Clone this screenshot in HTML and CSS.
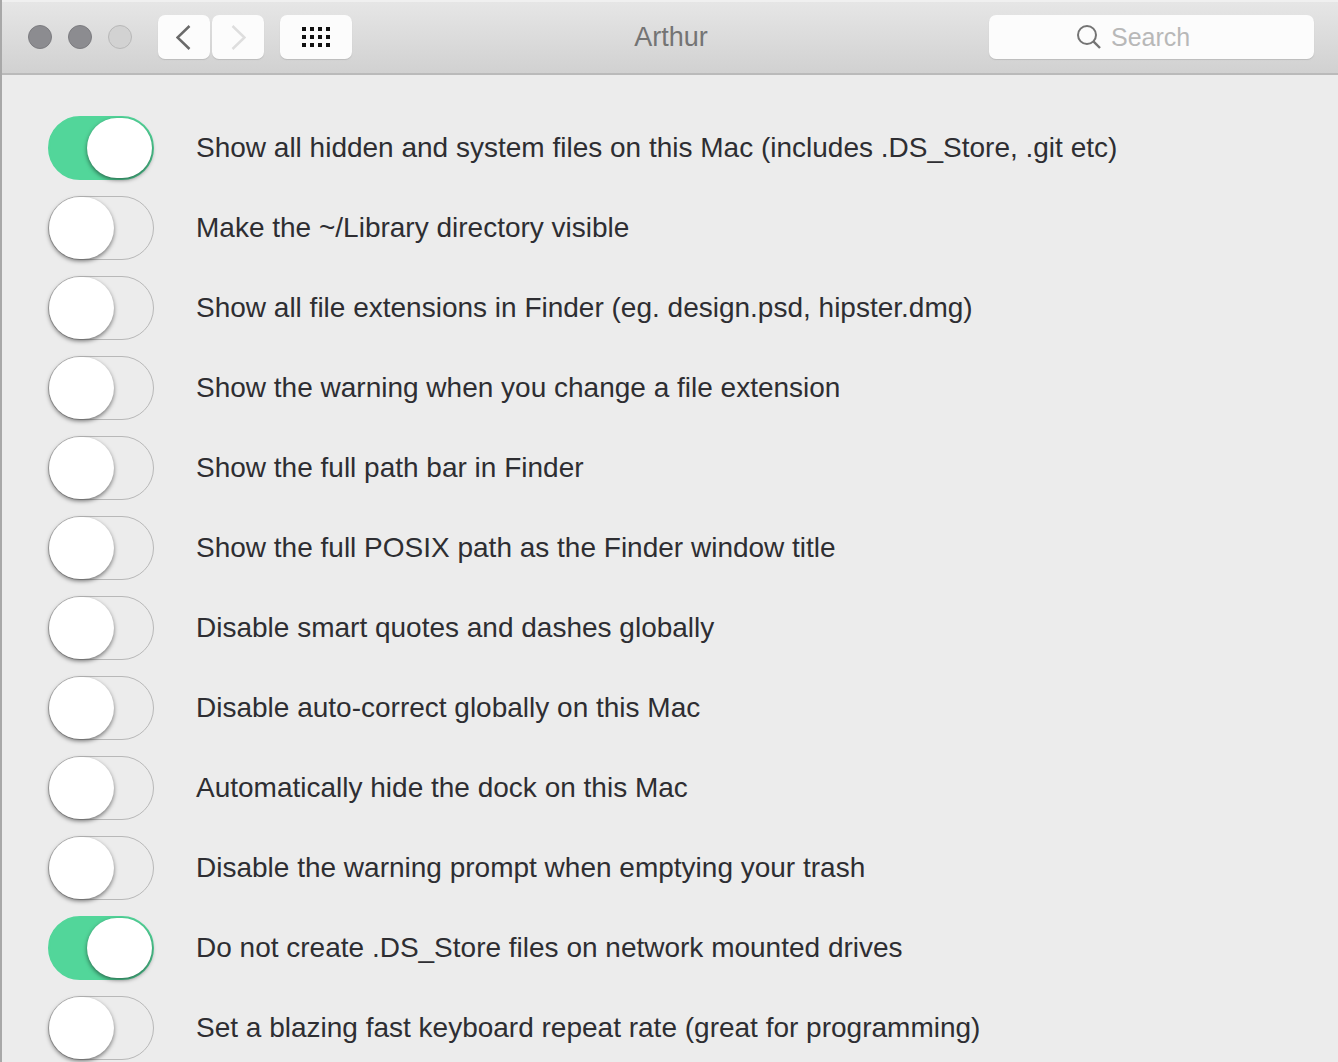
FILE: index.html
```html
<!DOCTYPE html>
<html lang="en">
<head>
<meta charset="utf-8">
<meta name="viewport" content="width=device-width, initial-scale=1">
<title>Arthur</title>
<link rel="stylesheet" href="styles.css">
</head>
<body>
<div class="window">
  <header class="toolbar">
    <div class="toolbar-left">
      <div class="lights">
        <button class="light" type="button" aria-label="Close"></button>
        <button class="light" type="button" aria-label="Minimize"></button>
        <button class="light light-off" type="button" aria-label="Zoom" disabled></button>
      </div>
      <nav class="nav">
        <button class="tool" type="button" aria-label="Back">
          <svg width="16" height="26" viewBox="0 0 16 26"><path d="M13.500 2 1.500 13.500l12 11.500" fill="none" stroke="#6a6a6a" stroke-width="2.5"/></svg>
        </button>
        <button class="tool" type="button" aria-label="Forward" disabled>
          <svg width="16" height="26" viewBox="0 0 16 26"><path d="M2.500 2l12 11.500L2.500 25" fill="none" stroke="#dedede" stroke-width="2.5"/></svg>
        </button>
      </nav>
      <button class="tool tool-wide" type="button" aria-label="Show all">
        <svg width="30" height="22" viewBox="0 0 30 22" fill="#111"><path d="M1 1h4v4H1zM9 1h4v4H9zM17 1h4v4h-4zM25 1h4v4h-4zM1 9h4v4H1zM9 9h4v4H9zM17 9h4v4h-4zM25 9h4v4h-4zM1 17h4v4H1zM9 17h4v4H9zM17 17h4v4h-4zM25 17h4v4h-4z"/></svg>
      </button>
    </div>
    <h1 class="title">Arthur</h1>
    <label class="search">
      <svg width="24" height="24" viewBox="0 0 24 24" fill="none" stroke="#747474" stroke-width="2"><circle cx="10" cy="10" r="9"/><path d="M16.400 16.400 23 23" stroke-width="2.4"/></svg>
      <input class="search-input" type="text" placeholder="Search" aria-label="Search">
    </label>
  </header>
  <main class="settings">
    <label class="row"><input class="switch" type="checkbox" checked><span>Show all hidden and system files on this Mac (includes .DS_Store, .git etc)</span></label>
    <label class="row"><input class="switch" type="checkbox"><span>Make the ~/Library directory visible</span></label>
    <label class="row"><input class="switch" type="checkbox"><span>Show all file extensions in Finder (eg. design.psd, hipster.dmg)</span></label>
    <label class="row"><input class="switch" type="checkbox"><span>Show the warning when you change a file extension</span></label>
    <label class="row"><input class="switch" type="checkbox"><span>Show the full path bar in Finder</span></label>
    <label class="row"><input class="switch" type="checkbox"><span>Show the full POSIX path as the Finder window title</span></label>
    <label class="row"><input class="switch" type="checkbox"><span>Disable smart quotes and dashes globally</span></label>
    <label class="row"><input class="switch" type="checkbox"><span>Disable auto-correct globally on this Mac</span></label>
    <label class="row"><input class="switch" type="checkbox"><span>Automatically hide the dock on this Mac</span></label>
    <label class="row"><input class="switch" type="checkbox"><span>Disable the warning prompt when emptying your trash</span></label>
    <label class="row"><input class="switch" type="checkbox" checked><span>Do not create .DS_Store files on network mounted drives</span></label>
    <label class="row"><input class="switch" type="checkbox"><span>Set a blazing fast keyboard repeat rate (great for programming)</span></label>
  </main>
</div>
</body>
</html>
```
FILE: styles.css
```css
* {
  box-sizing: border-box;
}

body {
  margin: 0;
  background: #ececec;
  color: #2e2e32;
  font-family: "Liberation Sans", Arial, sans-serif;
  font-size: 28px;
  line-height: 32px;
}

.window {
  min-height: 100vh;
  border-left: 2px solid #a8a8a8;
}

.toolbar {
  display: grid;
  grid-template-columns: 1fr auto 1fr;
  align-items: center;
  padding: 13px 24px 14px 26px;
  border-top: 2px solid #f0f0f0;
  border-bottom: 2px solid #bababa;
  background: linear-gradient(#e6e6e6, #d1d1d1);
}

.toolbar-left,
.lights,
.nav {
  display: flex;
  align-items: center;
}

.lights {
  gap: 16px;
  margin-right: 26px;
}

.nav {
  gap: 2px;
  margin-right: 16px;
}

.light {
  width: 24px;
  height: 24px;
  padding: 0;
  border: 1px solid #7c7c80;
  border-radius: 50%;
  background: #8c8c90;
}

.light-off {
  border-color: #b8b8b8;
  background: #d2d2d2;
}

.tool {
  display: flex;
  align-items: center;
  justify-content: center;
  width: 52px;
  height: 44px;
  padding: 0;
  border: 0;
  border-radius: 7px;
  background: #fcfcfc;
  box-shadow: 0 1px 1px #bcbcbc;
}

.tool-wide {
  width: 72px;
}

.title {
  margin: 0;
  color: #747474;
  font-size: 27px;
  font-weight: 400;
}

.search {
  display: flex;
  align-items: center;
  justify-content: center;
  justify-self: end;
  gap: 10px;
  width: 325px;
  height: 44px;
  padding: 0 20px;
  border-radius: 7px;
  background: #fcfcfc;
  box-shadow: 0 1px 1px #bcbcbc;
}

.search-input {
  width: 115px;
  padding: 0;
  border: 0;
  outline: 0;
  background: transparent;
  color: #444;
  font: inherit;
  font-size: 25px;
}

.search-input::placeholder {
  color: #b8b8b8;
  opacity: 1;
}

.settings {
  display: flex;
  flex-direction: column;
  gap: 16px;
  padding: 41px 46px 0;
}

.row {
  display: flex;
  align-items: center;
  gap: 42px;
}

.switch {
  appearance: none;
  display: flex;
  flex: none;
  width: 106px;
  height: 64px;
  margin: 0;
  border: 1px solid #b8b8b8;
  border-radius: 32px;
}

.switch::before {
  content: "";
  width: 65px;
  border-radius: 32px;
  background: #fff;
  box-shadow: 0 2px 4px #00000080;
}

.switch:checked {
  justify-content: flex-end;
  border: 2px solid #52d69a;
  background: #52d69a;
}
```
